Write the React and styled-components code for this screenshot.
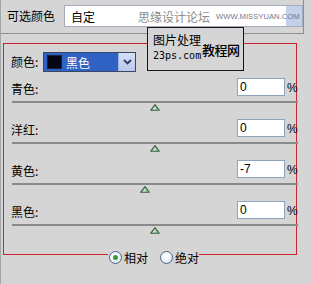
import React from 'react';
import styled, { createGlobalStyle } from 'styled-components';

const Global = createGlobalStyle`
  html, body { margin: 0; padding: 0; background: #d5d5d5; }
  body {
    width: 312px; height: 284px; overflow: hidden;
    font-family: "Noto Sans CJK SC", "Liberation Sans", sans-serif;
    font-size: 12px; color: #000;
  }
  * { box-sizing: border-box; }
`;

const Page = styled.div`
  position: relative;
  width: 312px;
  height: 284px;
  background: #d5d5d5;
  border-left: 1px solid #a6a6a6;
`;

const TopBar = styled.div`
  display: flex;
  align-items: flex-start;
  width: 303px;
  height: 34px;
  padding: 5px 0 0 6px;
  border-bottom: 1px solid #8f8f8f;
  border-right: 1px solid #8f8f8f;
`;

const Title = styled.span`
  font-size: 12px;
  line-height: 22px;
  width: 57px;
`;

const PresetBox = styled.div`
  display: flex;
  align-items: center;
  width: 239px;
  height: 22px;
  padding-left: 6px;
  border: 1px solid #a3acbd;
  background: linear-gradient(to left, #c3d0ea 16px, #fff 16px);
  white-space: nowrap;
`;

const PresetText = styled.span`
  font-size: 12px;
`;

const SiteMarkCn = styled.span`
  margin-left: 43px;
  font-size: 12px;
  color: #8c8c8c;
`;

const SiteMarkEn = styled.span`
  margin-left: 6px;
  font-family: "Liberation Sans", sans-serif;
  font-size: 7.7px;
  color: #767a88;
`;

const Panel = styled.div`
  margin: 9px 0 0 2px;
  width: 294px;
  height: 212px;
  border: 1px solid #c7272d;
  padding: 8px 0 0 7px;
`;

const ColorRow = styled.div`
  display: flex;
  align-items: center;
  height: 20px;
`;

const Label = styled.span`
  font-size: 12px;
  line-height: 14px;
  width: ${p => p.$w || 'auto'};
  flex: ${p => (p.$grow ? 1 : 'none')};
`;

const Dropdown = styled.div`
  display: flex;
  width: 93px;
  height: 20px;
  border: 1px solid #3b4762;
  background: #2f62c4;
`;

const DropValue = styled.div`
  flex: 1;
  display: flex;
  align-items: center;
  padding-left: 3px;
  color: #fff;
`;

const Swatch = styled.div`
  width: 15px;
  height: 14px;
  background: #050814;
  border: 1px solid #1a2236;
  margin-right: 4px;
`;

const DropButton = styled.div`
  width: 17px;
  display: flex;
  align-items: center;
  justify-content: center;
  background: linear-gradient(#d6e0f5, #b9c9ec);
  border-left: 1px solid #9fb2dc;
`;

const SliderRow = styled.div`
  display: flex;
  flex-direction: column;
  height: 41px;
  margin-right: -2px;
  margin-top: ${p => p.$first ? '6px' : '0'};
`;

const RowHead = styled.div`
  display: flex;
  align-items: flex-end;
  height: 18px;
`;

const NumInput = styled.div`
  width: 48px;
  height: 18px;
  border: 1px solid #8ea3bd;
  background: #fff;
  padding-left: 2px;
  font-family: "Liberation Sans", sans-serif;
  font-size: 12px;
  line-height: 16px;
`;

const Percent = styled.span`
  margin-left: 2px;
  font-family: "Liberation Sans", sans-serif;
  font-size: 12px;
  line-height: 15px;
  width: 11px;
`;

const Track = styled.div`
  margin: 5px 0 0 1px;
  height: 2px;
  background: #8a8a8a;
`;

const ThumbLane = styled.div`
  position: relative;
  margin: 1px 0 0 1px;
  height: 7px;
`;

const Thumb = styled.svg`
  position: absolute;
  top: 0;
  width: 10px;
  height: 7px;
`;

const RadioGroup = styled.div`
  position: relative;
  display: flex;
  align-items: center;
  margin: -5px 0 0 107px;
  width: 91px;
  height: 14px;
  padding-left: 1px;
  background: #d5d5d5;
`;

const RadioItem = styled.div`
  display: flex;
  align-items: center;
  margin-right: ${p => p.$gap || '0'};
`;

const Circle = styled.div`
  width: 13px;
  height: 13px;
  border-radius: 50%;
  border: 1px solid #4b6690;
  background: radial-gradient(circle at 40% 35%, #ffffff 0%, #eef2f8 50%, #c9d3e4 100%);
  display: flex;
  align-items: center;
  justify-content: center;
  margin-right: 2px;
`;

const Dot = styled.div`
  width: 5px;
  height: 5px;
  border-radius: 50%;
  background: #3a9b2c;
`;

const Watermark = styled.div`
  position: absolute;
  left: 146px;
  top: 27px;
  width: 97px;
  height: 44px;
  border: 1px solid #161616;
  background: #d5d5d5;
  display: flex;
  padding: 4px 0 0 5px;
`;

const WmLeft = styled.div`
  display: flex;
  flex-direction: column;
  width: 49px;
`;

const WmTitle = styled.span`
  font-size: 12px;
  line-height: 15px;
  white-space: nowrap;
`;

const WmSite = styled.span`
  margin-top: 3px;
  font-family: "DejaVu Sans Mono", "Liberation Mono", monospace;
  font-size: 10px;
  line-height: 12px;
  white-space: nowrap;
`;

const WmRight = styled.span`
  margin-top: 9px;
  font-size: 13px;
  line-height: 17px;
  font-weight: 500;
  white-space: nowrap;
  letter-spacing: -0.5px;
`;

const TRACK_W = 286;

const sliders = [
  { name: '青色:', value: 0 },
  { name: '洋红:', value: 0 },
  { name: '黄色:', value: -7 },
  { name: '黑色:', value: 0 },
];

function ThumbIcon({ value }) {
  const center = TRACK_W / 2 + (value / 100) * (TRACK_W / 2);
  return (
    <Thumb viewBox="0 0 10 7" style={{ left: `${center - 5}px` }}>
      <path d="M5 0.7 L9.3 6.3 L0.7 6.3 Z" fill="#9fd6aa" stroke="#3d5e47" strokeWidth="1.1" strokeLinejoin="round" />
      <path d="M5 2.4 L3.2 5.2 L5 5.2 Z" fill="#d9f2de" />
    </Thumb>
  );
}

export default function App() {
  return (
    <>
      <Global />
      <Page>
        <TopBar>
          <Title>可选颜色</Title>
          <PresetBox>
            <PresetText>自定</PresetText>
            <SiteMarkCn>思缘设计论坛</SiteMarkCn>
            <SiteMarkEn>WWW.MISSYUAN.COM</SiteMarkEn>
          </PresetBox>
        </TopBar>

        <Panel>
          <ColorRow>
            <Label $w="32px">颜色:</Label>
            <Dropdown>
              <DropValue>
                <Swatch />
                黑色
              </DropValue>
              <DropButton>
                <svg width="9" height="6" viewBox="0 0 9 6">
                  <path d="M1 1 L4.5 4.5 L8 1" fill="none" stroke="#2b3d68" strokeWidth="1.8" />
                </svg>
              </DropButton>
            </Dropdown>
          </ColorRow>

          {sliders.map((s, i) => (
            <SliderRow key={s.name} $first={i === 0}>
              <RowHead>
                <Label $grow>{s.name}</Label>
                <NumInput>{s.value}</NumInput>
                <Percent>%</Percent>
              </RowHead>
              <Track />
              <ThumbLane>
                <ThumbIcon value={s.value} />
              </ThumbLane>
            </SliderRow>
          ))}
        </Panel>

        <RadioGroup>
          <RadioItem $gap="12px">
            <Circle><Dot /></Circle>
            <span>相对</span>
          </RadioItem>
          <RadioItem>
            <Circle />
            <span>绝对</span>
          </RadioItem>
        </RadioGroup>

        <Watermark>
          <WmLeft>
            <WmTitle>图片处理</WmTitle>
            <WmSite>23ps.com</WmSite>
          </WmLeft>
          <WmRight>教程网</WmRight>
        </Watermark>
      </Page>
    </>
  );
}
